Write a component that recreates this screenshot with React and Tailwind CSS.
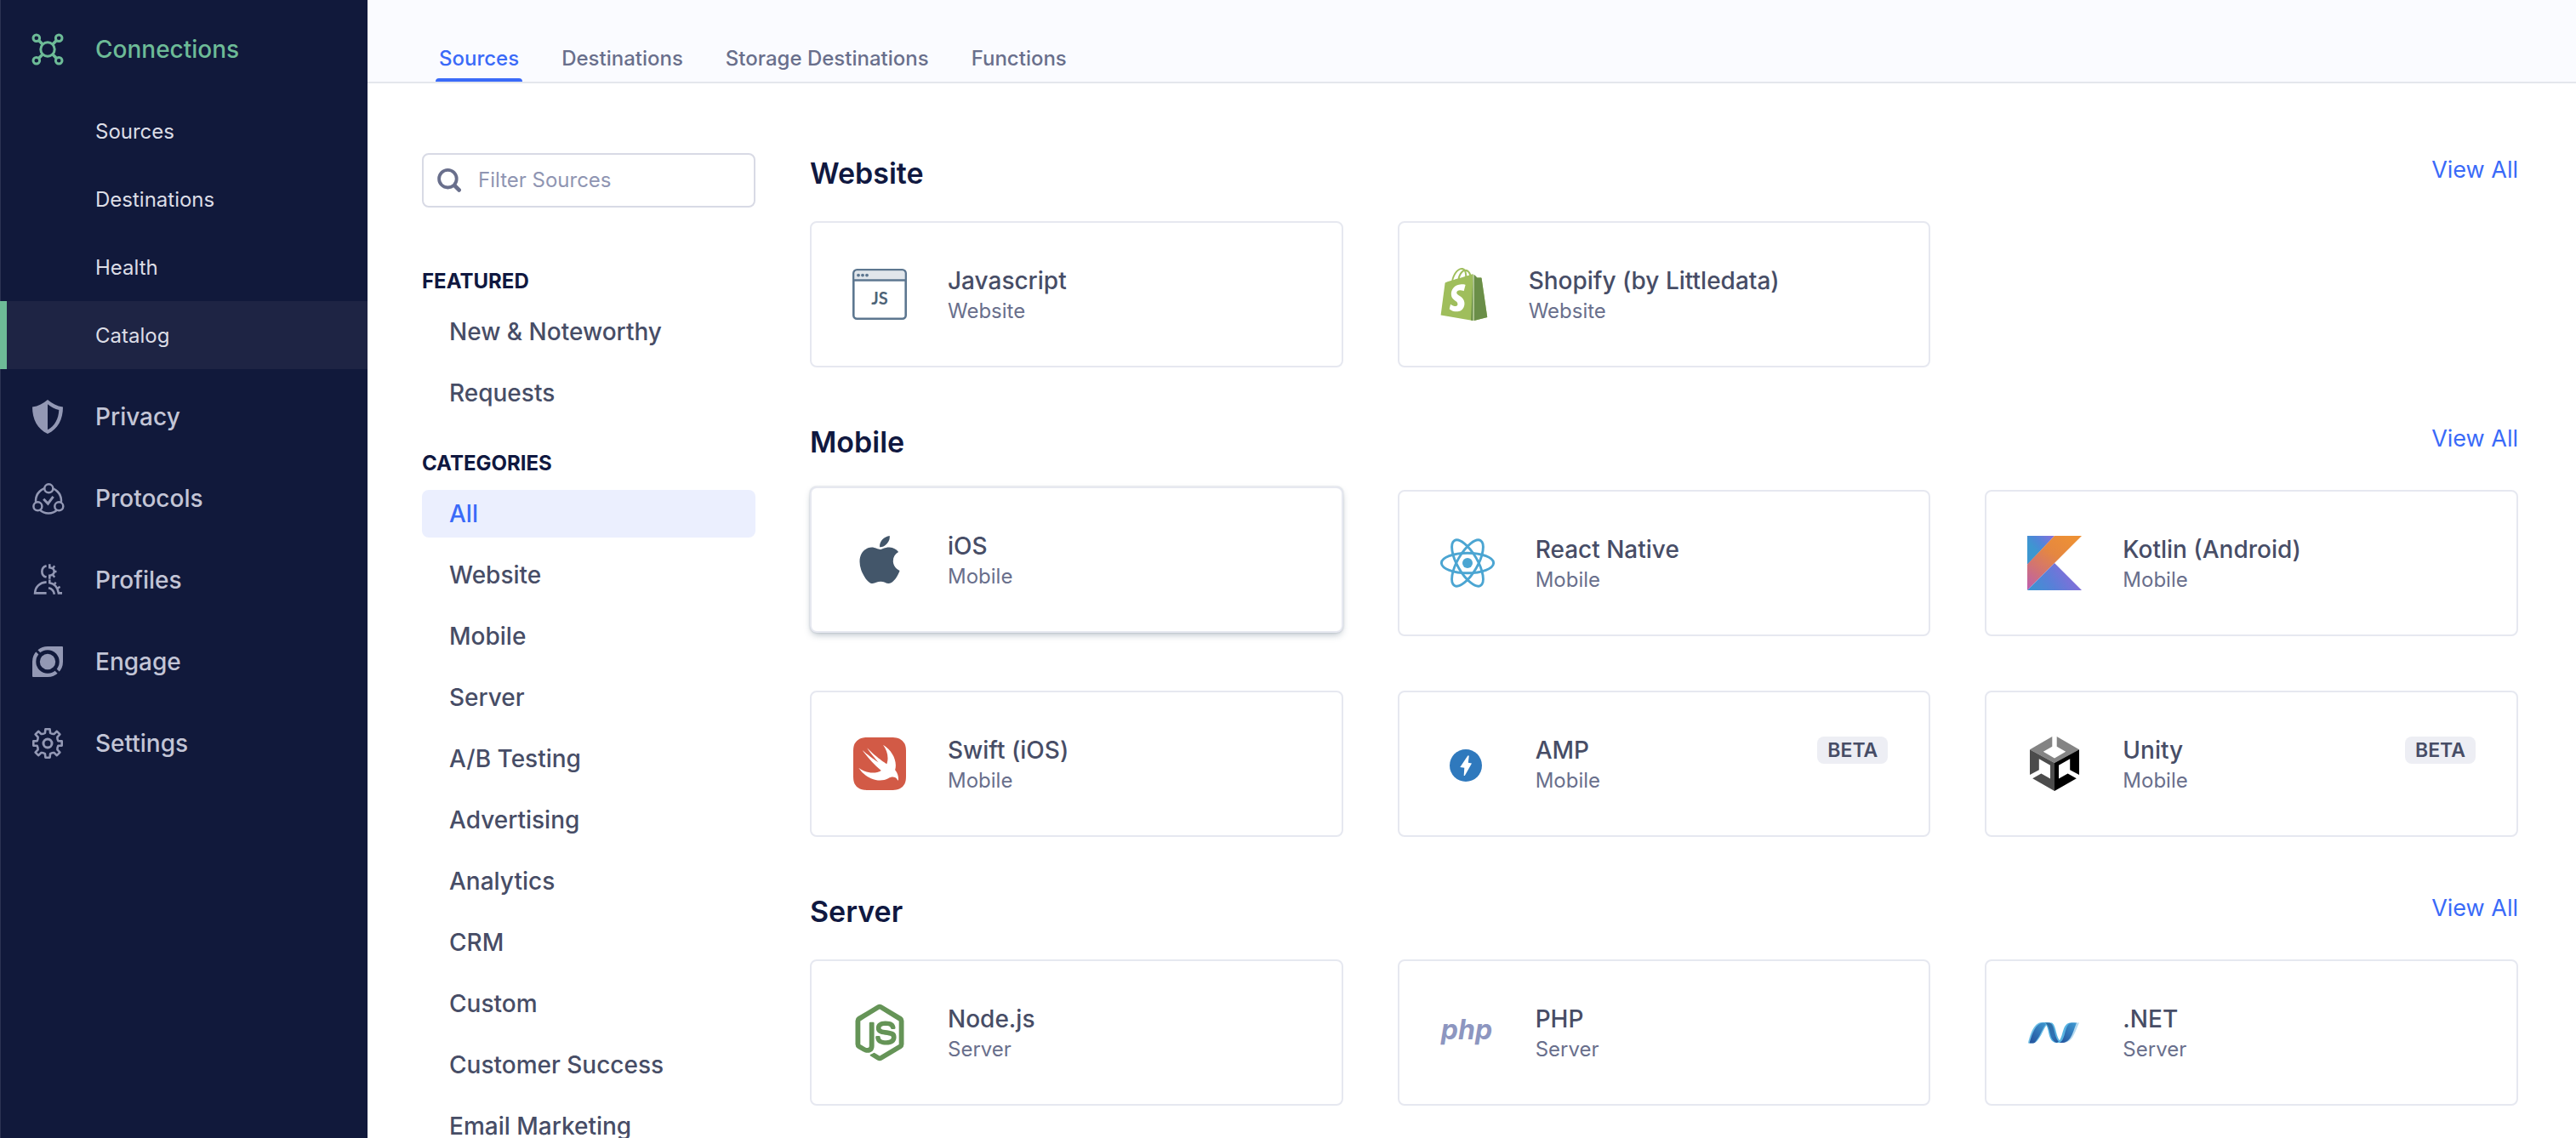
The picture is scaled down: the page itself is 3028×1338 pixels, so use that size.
import React from "react";
import { FaApple, FaShopify } from "react-icons/fa";
import { SiSwift } from "react-icons/si";
import { IoLogoNodejs } from "react-icons/io5";

const NAVY = "#11193b";

/* ---------- sidebar icons ---------- */

function ConnectionsIcon() {
  return (
    <svg viewBox="0 0 40 40" className="size-10" fill="none" stroke="currentColor" strokeWidth="3" aria-hidden="true">
      <circle cx="20" cy="20" r="8.2" />
      <circle cx="6.8" cy="6.8" r="3.8" />
      <circle cx="33.2" cy="6.8" r="3.8" />
      <circle cx="6.8" cy="33.2" r="3.8" />
      <circle cx="33.2" cy="33.2" r="3.8" />
      <path strokeWidth="3.6" d="M9.6 9.6 14 14M30.4 9.6 26 14M9.6 30.4 14 26M30.4 30.4 26 26" />
    </svg>
  );
}

function PrivacyIcon() {
  return (
    <svg viewBox="0 0 40 40" className="size-10" fill="currentColor" aria-hidden="true">
      <path
        fillRule="evenodd"
        d="M20 0C15 4.5 9 7.6 2 8.4c0 14.600 6 26 18 31.600 12-5.600 18-17 18-31.600C31 7.600 25 4.500 20 0Zm0 5.200c4 3.400 8.500 5.700 13.300 6.700C32.800 22.500 28.500 30.500 20 35.200Z"
      />
    </svg>
  );
}

function ProtocolsIcon() {
  return (
    <svg viewBox="0 0 40 40" className="size-10" fill="none" stroke="currentColor" strokeWidth="2.5" aria-hidden="true">
      <circle cx="21" cy="22.600" r="15" />
      <circle cx="21.300" cy="8.300" r="5" fill={NAVY} />
      <circle cx="8.400" cy="29.300" r="5" fill={NAVY} />
      <circle cx="33.300" cy="29.300" r="5" fill={NAVY} />
      <path strokeWidth="3" d="m15.200 20.800 5.200 5.400 6.200-8.400" />
    </svg>
  );
}

function ProfilesIcon() {
  return (
    <svg viewBox="0 0 40 40" className="size-10" fill="none" stroke="currentColor" strokeWidth="2.6" aria-hidden="true">
      <path d="M18.600 3.200a6.900 6.900 0 0 0 0 13.400" />
      <path d="M18.600 22.400C10.500 23 5.400 28.200 5.100 35.400h13.500" />
      <path d="M22.300 1.300v4c3.200.4 5.400 2.200 5.400 4.700s-2.200 4.300-5.400 4.700v4" />
      <path strokeWidth="2.400" d="m25.700 6.200 2.600-2.800M27.500 10h3M25.700 13.800l2.600 2.800" />
      <path d="M21 29.200c3.800.8 6.300 3.200 6.900 7.500" />
      <path d="M22.300 19.400v3.800c6.200 1.200 9.600 5 10.600 12.200H37" />
      <path strokeWidth="2.400" d="m27.600 25.600 2-3M31.400 29.800l3.200-1.900" />
    </svg>
  );
}

function EngageIcon() {
  return (
    <svg viewBox="0 0 40 40" className="size-10" aria-hidden="true">
      <path
        fill="currentColor"
        stroke="currentColor"
        strokeWidth="2"
        strokeLinejoin="round"
        d="M3 37V20A17 17 0 0 1 20 3H37V20A17 17 0 0 1 20 37Z"
      />
      <circle cx="20" cy="20" r="13.700" fill={NAVY} />
      <path stroke={NAVY} strokeWidth="3" d="m3 3 10 10M37 37 27 27" />
      <circle cx="20" cy="20" r="9.200" fill="currentColor" />
    </svg>
  );
}

function SettingsIcon() {
  return (
    <svg viewBox="0 0 40 40" className="size-10" fill="none" stroke="currentColor" strokeWidth="2.600" strokeLinejoin="round" aria-hidden="true">
      <circle cx="20" cy="20" r="5" strokeWidth="3" />
      <path d="M17.400 3.300h5.200l.5 4.600q2.900 1.400 4.600 1l3.200-3.100 3.500 3.500-3 3.400q-.3 1.800 1 4.500l4.300.2v5.200l-4.300.2q-1.300 2.700-1 4.500l3 3.400-3.500 3.500-3.200-3.100q-1.700-.4-4.600 1l-.5 4.600h-5.200l-.5-4.600q-2.900-1.400-4.600-1l-3.200 3.100-3.500-3.500 3-3.400q.3-1.800-1-4.500l-4.300-.2v-5.200l4.300-.2q1.300-2.700 1-4.500l-3-3.400 3.500-3.500 3.200 3.100q1.700.4 4.600-1z" />
    </svg>
  );
}

function SearchIcon() {
  return (
    <svg viewBox="0 0 28 28" className="size-7 shrink-0 text-[#696f8c]" fill="none" stroke="currentColor" aria-hidden="true">
      <circle cx="12.400" cy="12.200" r="10.300" strokeWidth="3.800" />
      <path d="m20.800 20.600 4.800 4.800" strokeWidth="4.800" strokeLinecap="round" />
    </svg>
  );
}

/* ---------- catalog logos ---------- */

function JavascriptLogo() {
  return (
    <svg viewBox="0 0 64 64" className="size-16" aria-hidden="true">
      <rect x="1.300" y="3.300" width="61.400" height="57.400" rx="4" fill="#fff" stroke="#5d7790" strokeWidth="2.600" />
      <path d="M2.600 15V7q0-2.400 2.400-2.400h54q2.400 0 2.400 2.400v8z" fill="#e1e6eb" />
      <path d="M1.300 15.500h61.400" stroke="#5d7790" strokeWidth="2.600" />
      <g fill="#5d7790">
        <circle cx="7" cy="9.600" r="1.900" />
        <circle cx="12" cy="9.600" r="1.900" />
        <circle cx="17" cy="9.600" r="1.900" />
      </g>
      <text x="32" y="43.500" textAnchor="middle" fontFamily="Lato, sans-serif" fontWeight="700" fontSize="20" fill="#4e6478">
        JS
      </text>
    </svg>
  );
}

function ShopifyLogo() {
  return (
    <span className="grid h-16 w-14" aria-hidden="true">
      <FaShopify className="col-start-1 row-start-1 h-16 w-14 text-[#9fbe5c]" />
      <FaShopify className="col-start-1 row-start-1 h-16 w-14 text-[#6a8e48] [clip-path:polygon(70%_0,100%_0,100%_100%,65%_100%)]" />
    </span>
  );
}

function AppleLogo() {
  return <FaApple className="size-16 text-[#43566a]" aria-hidden="true" />;
}

function ReactLogo() {
  return (
    <svg viewBox="0 0 64 64" className="size-16" fill="none" stroke="#4ba5d2" strokeWidth="2.900" aria-hidden="true">
      <ellipse cx="32" cy="32" rx="30.600" ry="11.800" />
      <ellipse cx="32" cy="32" rx="30.600" ry="11.800" transform="rotate(60 32 32)" />
      <ellipse cx="32" cy="32" rx="30.600" ry="11.800" transform="rotate(120 32 32)" />
      <circle cx="32" cy="32" r="6" fill="#4ba5d2" stroke="none" />
    </svg>
  );
}

function KotlinLogo() {
  return (
    <svg viewBox="0 0 64 64" className="size-16" aria-hidden="true">
      <defs>
        <linearGradient id="kt-top" gradientUnits="userSpaceOnUse" x1="6" y1="18" x2="28" y2="-2">
          <stop offset="0.100" stopColor="#3d97d0" />
          <stop offset="0.450" stopColor="#4f86d8" />
          <stop offset="1" stopColor="#8670dc" />
        </linearGradient>
        <linearGradient id="kt-band" gradientUnits="userSpaceOnUse" x1="0" y1="62" x2="48" y2="0">
          <stop offset="0" stopColor="#bd5fae" />
          <stop offset="0.300" stopColor="#d07277" />
          <stop offset="0.650" stopColor="#e58741" />
          <stop offset="1" stopColor="#ed9035" />
        </linearGradient>
        <linearGradient id="kt-bottom" gradientUnits="userSpaceOnUse" x1="8" y1="68" x2="46" y2="42">
          <stop offset="0" stopColor="#3d92d2" />
          <stop offset="0.500" stopColor="#5880d8" />
          <stop offset="1" stopColor="#7d70d9" />
        </linearGradient>
      </defs>
      <path d="M0 0h32L0 34z" fill="url(#kt-top)" />
      <path d="M32 0h32L0 64V33.500z" fill="url(#kt-band)" />
      <path d="m0 64 32-32 32 32z" fill="url(#kt-bottom)" />
    </svg>
  );
}

function SwiftLogo() {
  return <SiSwift className="h-[62px] w-16 text-[#d25a46]" aria-hidden="true" />;
}

function AmpLogo() {
  return (
    <svg viewBox="0 0 64 64" className="size-16" aria-hidden="true">
      <circle cx="30" cy="34" r="19" fill="#2f79bd" />
      <path d="m32.300 22.400-9 13.600 5 .700-.600 9.400h1.100l8.200-14.600-4.200-.8 1-8.300z" fill="#fff" />
    </svg>
  );
}

function UnityLogo() {
  return (
    <svg viewBox="-3 0 64 64" className="size-16" aria-hidden="true">
      <path fill="#848484" d="M26.300 0v11.700l-10.500 6L29 25.500l13.200-7.800-10.500-6V0L58 15.300 29 31 0 15.300z" />
      <path fill="#4c4c4c" d="M0 15.300 29 31v33L3.200 49.300l10.200-5.800L24 49.500v-15.700l-13.200-7.600v13L0 45z" />
      <path fill="#000" d="M58 15.300 29 31v33l25.800-14.700-10.200-5.800L34 49.500v-15.700l13.200-7.600v13L58 45z" />
    </svg>
  );
}

function NodeLogo() {
  return (
    <span className="flex size-16 items-center justify-center text-[#659457]" aria-hidden="true">
      <IoLogoNodejs className="size-[76px] shrink-0" />
    </span>
  );
}

function PhpLogo() {
  return (
    <svg viewBox="0 0 64 64" className="size-16" aria-hidden="true">
      <text x="31" y="40" textAnchor="middle" fontFamily="Inter, sans-serif" fontWeight="700" fontStyle="italic" fontSize="32" fill="#8d96c0">
        php
      </text>
    </svg>
  );
}

function DotNetLogo() {
  return (
    <svg viewBox="0 0 64 64" className="size-16" aria-hidden="true">
      <defs>
        <linearGradient id="net-a" x1="0" y1="1" x2="1" y2="0">
          <stop offset="0" stopColor="#23509b" />
          <stop offset="1" stopColor="#3f9bd3" />
        </linearGradient>
        <linearGradient id="net-b" x1="0" y1="0" x2="1" y2="1">
          <stop offset="0" stopColor="#2d6ca0" />
          <stop offset="0.600" stopColor="#2f71b4" />
          <stop offset="1" stopColor="#234f94" />
        </linearGradient>
      </defs>
      <path fill="#6fc0e6" d="M1 44.500C3 36 7 20.500 17 20h9C20 24 18 34 13 40q-3 4.500-7 4.500z" />
      <path fill="url(#net-a)" d="M2.500 44.500C6 32 10 21.500 18 20.500h6C18 25 16 35 11 41q-2 3.500-4 3.500z" />
      <path fill="#58b4e2" d="M20 20.500h9c6 4 4 21 13 23.500h-9C23 41 27 26 20 20.500z" />
      <path fill="url(#net-b)" d="M21 20.500h5.500c7 3 4.500 21 13 23.500h-5C25 41 28 25 21 20.500z" />
      <path fill="#b5daf0" d="M39 44c8-3 8-22 17-23.500h5C56 31 54 43 43 44z" />
      <path fill="#58b4e2" d="M35 44C43 40 40 22 50 20.500h6C50 25 50 41 40 44z" />
      <path fill="url(#net-a)" d="M38 44C46 40 43 22 52 20.500h6C54 30 52 43 42 44z" />
    </svg>
  );
}

/* ---------- data ---------- */

const connectionLinks = ["Sources", "Destinations", "Health", "Catalog"];

const productLinks = [
  { label: "Privacy", Icon: PrivacyIcon },
  { label: "Protocols", Icon: ProtocolsIcon },
  { label: "Profiles", Icon: ProfilesIcon },
  { label: "Engage", Icon: EngageIcon },
  { label: "Settings", Icon: SettingsIcon },
];

const tabs = ["Sources", "Destinations", "Storage Destinations", "Functions"];

const featured = ["New & Noteworthy", "Requests"];

const categories = [
  "All",
  "Website",
  "Mobile",
  "Server",
  "A/B Testing",
  "Advertising",
  "Analytics",
  "CRM",
  "Custom",
  "Customer Success",
  "Email Marketing",
];

const sections = [
  {
    title: "Website",
    items: [
      { name: "Javascript", Logo: JavascriptLogo },
      { name: "Shopify (by Littledata)", Logo: ShopifyLogo },
    ],
  },
  {
    title: "Mobile",
    items: [
      { name: "iOS", Logo: AppleLogo, raised: true },
      { name: "React Native", Logo: ReactLogo },
      { name: "Kotlin (Android)", Logo: KotlinLogo },
      { name: "Swift (iOS)", Logo: SwiftLogo },
      { name: "AMP", Logo: AmpLogo, beta: true },
      { name: "Unity", Logo: UnityLogo, beta: true },
    ],
  },
  {
    title: "Server",
    items: [
      { name: "Node.js", Logo: NodeLogo },
      { name: "PHP", Logo: PhpLogo },
      { name: ".NET", Logo: DotNetLogo },
    ],
  },
];

/* ---------- layout ---------- */

function Sidebar() {
  return (
    <nav aria-label="Main" className="w-[432px] shrink-0 bg-[#11193b] pt-2.5 shadow-[inset_1px_0_0_#2b3252]">
      <a href="#connections" className="flex h-24 items-center gap-9 pl-9 text-[28px] font-medium text-[#6dbb97]">
        <ConnectionsIcon />
        Connections
      </a>
      <ul className="my-2">
        {connectionLinks.map((label) => (
          <li key={label}>
            <a
              href={"#" + label.toLowerCase()}
              aria-current={label === "Catalog" ? "page" : undefined}
              className={
                "flex h-20 items-center border-l-8 pt-0.5 pl-[104px] text-2xl text-[#dcdde6] " +
                (label === "Catalog" ? "border-[#6dbb97] bg-[#1e2444]" : "border-transparent")
              }
            >
              {label}
            </a>
          </li>
        ))}
      </ul>
      <ul>
        {productLinks.map(({ label, Icon }) => (
          <li key={label}>
            <a href={"#" + label.toLowerCase()} className="flex h-24 items-center gap-9 pl-9 text-[28px] font-medium text-[#c3c5d6]">
              <span className="text-[#9398b4]">
                <Icon />
              </span>
              {label}
            </a>
          </li>
        ))}
      </ul>
    </nav>
  );
}

function Tabs() {
  return (
    <header className="flex h-[98px] items-end gap-[42px] border-b-2 border-[#e4e7ec] bg-[#fafbff] pl-20">
      {tabs.map((label, i) => (
        <a
          key={label}
          href={"#tab-" + i}
          className={"flex flex-col text-2xl font-medium " + (i === 0 ? "text-[#3a6af8]" : "text-[#696f8c]")}
        >
          <span className="px-1 pb-[7px]">{label}</span>
          <span className={"h-1 rounded-t " + (i === 0 ? "bg-[#3a6af8]" : "")} />
        </a>
      ))}
    </header>
  );
}

function FilterGroup({ title, items, selected }) {
  return (
    <section>
      <h2 className="text-[24px] leading-[34px] font-bold text-[#101840] uppercase">{title}</h2>
      <ul className="mt-3.5 flex flex-col gap-4">
        {items.map((label) => (
          <li key={label}>
            <a
              href="#filter"
              className={
                "flex h-14 items-center rounded-lg pl-8 text-[28px] font-medium " +
                (label === selected ? "bg-[#ebeffe] text-[#3a6af8]" : "text-[#474d66]")
              }
            >
              {label}
            </a>
          </li>
        ))}
      </ul>
    </section>
  );
}

function Filters() {
  return (
    <aside className="w-[392px] shrink-0">
      <label className="flex h-16 items-center gap-5 rounded-lg border-2 border-[#d8dae5] bg-white px-4">
        <SearchIcon />
        <input
          type="text"
          aria-label="Filter Sources"
          placeholder="Filter Sources"
          className="min-w-0 flex-1 bg-transparent text-2xl text-[#474d66] outline-none placeholder:text-[#8f95b2]"
        />
      </label>
      <div className="mt-[70px] flex flex-col gap-[38px]">
        <FilterGroup title="Featured" items={featured} />
        <FilterGroup title="Categories" items={categories} selected="All" />
      </div>
    </aside>
  );
}

function SourceCard({ name, kind, Logo, raised, beta }) {
  return (
    <a
      href="#source"
      className={
        "flex items-center gap-12 rounded-lg border-2 border-[#e6e8f0] bg-white p-12 " +
        (raised ? "-translate-y-1 shadow-[0_0_2px_rgba(67,90,111,0.3),0_4px_8px_-2px_rgba(67,90,111,0.4)]" : "")
      }
    >
      <Logo />
      <div className="min-w-0 flex-1">
        <div className="flex items-center justify-between">
          <h3 className="text-[28px] leading-10 font-medium text-[#474d66]">{name}</h3>
          {beta && (
            <span className="rounded-lg bg-[#edeef4] px-3 text-[23px] leading-8 font-semibold text-[#474d66]">BETA</span>
          )}
        </div>
        <p className="text-2xl text-[#696f8c]">{kind}</p>
      </div>
    </a>
  );
}

function CatalogSection({ title, items }) {
  return (
    <section>
      <div className="mb-8 flex items-start justify-between">
        <h2 className="text-[34px] leading-12 font-semibold text-[#101840]">{title}</h2>
        <a href="#view-all" className="text-[27px] leading-10 text-[#3a6af8]">
          View All
        </a>
      </div>
      <div className="grid grid-cols-3 gap-16">
        {items.map((item) => (
          <SourceCard key={item.name} kind={title} {...item} />
        ))}
      </div>
    </section>
  );
}

export default function App() {
  return (
    <div className="flex h-screen overflow-hidden bg-white font-['Inter',sans-serif]">
      <Sidebar />
      <div className="min-w-0 flex-1">
        <Tabs />
        <div className="flex gap-16 pt-[82px] pr-[68px] pl-16">
          <Filters />
          <main className="flex min-w-0 flex-1 flex-col gap-16">
            {sections.map((section) => (
              <CatalogSection key={section.title} {...section} />
            ))}
          </main>
        </div>
      </div>
    </div>
  );
}
